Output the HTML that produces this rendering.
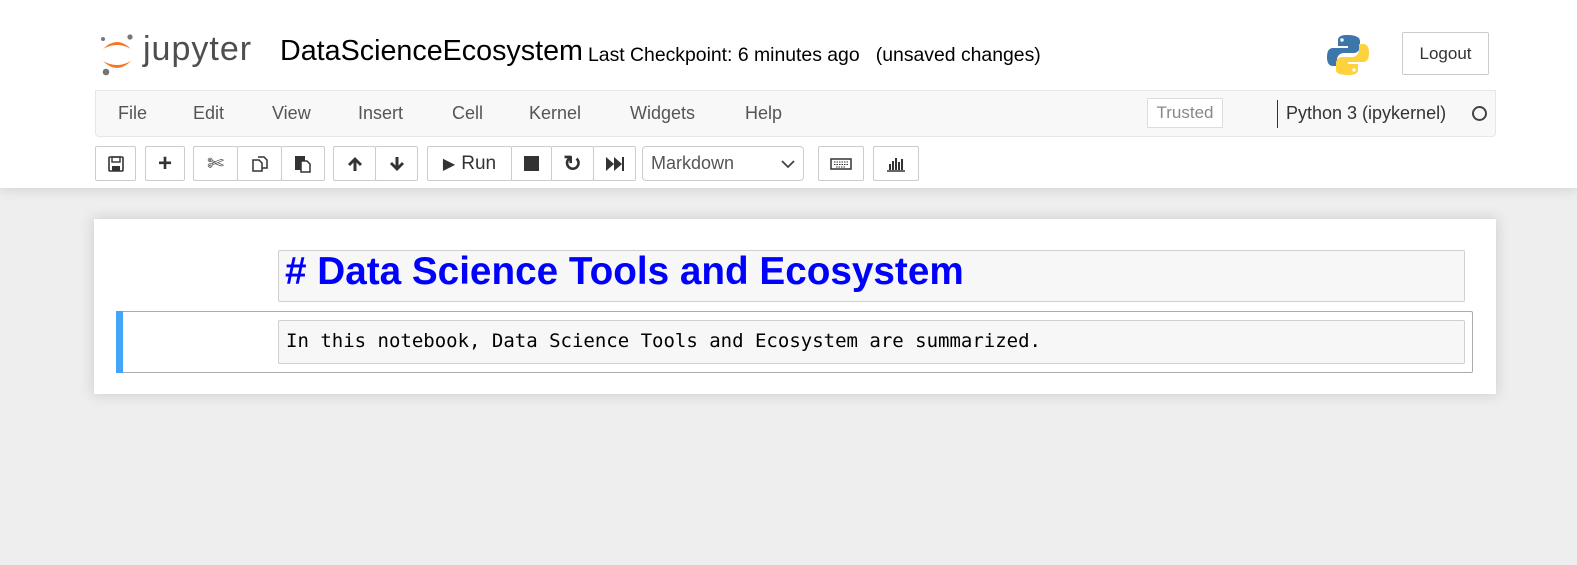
<!DOCTYPE html>
<html><head><meta charset="utf-8"><style>
body{margin:0;width:1577px;height:565px;background:#eee;font-family:"Liberation Sans",Arial,sans-serif;overflow:hidden;position:relative}
.hdr{position:absolute;left:0;top:0;width:1577px;height:188px;background:#fff;box-shadow:0 0 12px 1px rgba(87,87,87,.2)}
.abs{position:absolute}
.menubar{position:absolute;left:95px;top:90px;width:1401px;height:47px;background:#f8f8f8;border:1px solid #e7e7e7;border-radius:0 0 4px 4px;box-sizing:border-box}
.menu{position:absolute;top:103px;font-size:18px;color:#555}
.btn{position:absolute;top:146px;height:35px;border:1px solid #ccc;border-radius:2px;box-sizing:border-box;background:#fff;display:flex;align-items:center;justify-content:center;color:#333}
.nb{position:absolute;left:94px;top:219px;width:1402px;height:175px;background:#fff;box-shadow:0 0 12px 1px rgba(87,87,87,.2)}
</style></head><body>
<div class="hdr"></div>
<svg class="abs" style="left:99px;top:33px" width="36" height="44" viewBox="0 0 36 44">
<path d="M4 16 Q18 2 32 16 Q18 8 4 16Z" fill="#f37726"/>
<path d="M4 28 Q18 42 32 28 Q18 36 4 28Z" fill="#f37726"/>
<circle cx="4" cy="6" r="2" fill="#767677"/><circle cx="31" cy="4" r="2.6" fill="#767677"/><circle cx="7" cy="39" r="3.3" fill="#767677"/>
</svg>
<div class="abs" style="left:143px;top:30px;font-size:34px;color:#4e4e4e;letter-spacing:1px">jupyter</div>
<div class="abs" style="left:280px;top:35px;font-size:28.7px;color:#000">DataScienceEcosystem</div>
<div class="abs" style="left:588px;top:44px;font-size:19.4px;color:#000">Last Checkpoint: 6 minutes ago&nbsp;&nbsp; (unsaved changes)</div>
<svg class="abs" style="left:1326px;top:33px" width="44" height="44" viewBox="0 0 44 44">
<path d="M21 2c-9 0-9 4-9 6v5h10v2H7c-4 0-6 3-6 9s2 9 6 9h4v-6c0-4 3-7 7-7h10c3 0 6-3 6-6V8c0-3-3-6-13-6z" fill="#3d76ab"/>
<path d="M23 42c9 0 9-4 9-6v-5H22v-2h15c4 0 6-3 6-9s-2-9-6-9h-4v6c0 4-3 7-7 7H16c-3 0-6 3-6 6v7c0 3 3 5 13 5z" fill="#fdd23c"/>
<circle cx="16" cy="7" r="1.7" fill="#fff"/><circle cx="28" cy="37" r="1.7" fill="#fff"/>
</svg>
<div class="btn" style="left:1402px;top:32px;width:87px;height:43px;font-size:17px;border-radius:2px">Logout</div>
<div class="menubar"></div>
<div class="menu" style="left:118px">File</div>
<div class="menu" style="left:193px">Edit</div>
<div class="menu" style="left:272px">View</div>
<div class="menu" style="left:358px">Insert</div>
<div class="menu" style="left:452px">Cell</div>
<div class="menu" style="left:529px">Kernel</div>
<div class="menu" style="left:630px">Widgets</div>
<div class="menu" style="left:745px">Help</div>
<div class="abs" style="left:1147px;top:98px;width:76px;height:30px;border:1px solid #ddd;box-sizing:border-box;background:#fff;color:#888;font-size:17px;text-align:center;line-height:28px">Trusted</div>
<div class="abs" style="left:1277px;top:100px;width:1px;height:28px;background:#333"></div>
<div class="menu" style="left:1286px;color:#333">Python 3 (ipykernel)</div>
<div class="abs" style="left:1472px;top:106px;width:11px;height:11px;border:2px solid #444;border-radius:50%"></div>
<div class="btn" style="left:95px;width:41px"><svg width="16" height="16" viewBox="0 0 16 16"><rect x="1" y="1" width="14" height="14" rx="1" fill="none" stroke="#333" stroke-width="1.6"/><rect x="4" y="1" width="8" height="5" fill="none" stroke="#333" stroke-width="1.4"/><rect x="4" y="10" width="8" height="5" fill="#333"/></svg></div>
<div class="btn" style="left:145px;width:40px;font-size:24px;font-weight:bold">+</div>
<div class="btn" style="left:193px;width:45px;font-size:20px">✄</div>
<div class="btn" style="left:237px;width:45px"><svg width="18" height="18" viewBox="0 0 18 18"><path d="M2 5h6l3 3v8H2z M7 2h6l3 3v8h-5" fill="none" stroke="#333" stroke-width="1.5"/></svg></div>
<div class="btn" style="left:281px;width:44px"><svg width="18" height="18" viewBox="0 0 18 18"><rect x="1" y="1" width="10" height="14" fill="#333"/><path d="M7 6h6l3 3v8H7z" fill="#fff" stroke="#333" stroke-width="1.5"/></svg></div>
<div class="btn" style="left:333px;width:43px"><svg width="16" height="16" viewBox="0 0 16 16"><path d="M8 1L1 8l2 2 3.5-3.5V15h3V6.5L13 10l2-2z" fill="#333"/></svg></div>
<div class="btn" style="left:375px;width:43px"><svg width="16" height="16" viewBox="0 0 16 16"><path d="M8 15L1 8l2-2 3.5 3.5V1h3v8.5L13 6l2 2z" fill="#333"/></svg></div>
<div class="btn" style="left:427px;width:85px;font-size:19px"><span style="font-size:16px;margin-right:6px">▶</span>Run</div>
<div class="btn" style="left:511px;width:41px"><div style="width:15px;height:15px;background:#333"></div></div>
<div class="btn" style="left:551px;width:43px;font-size:22px;font-weight:bold">↻</div>
<div class="btn" style="left:593px;width:43px"><svg width="18" height="14" viewBox="0 0 18 14"><path d="M0 0l8 7-8 7z M8 0l8 7-8 7z M16 0h2v14h-2z" fill="#333"/></svg></div>
<div class="btn" style="left:642px;width:162px;justify-content:space-between;padding:0 8px;font-size:18px;color:#555;border-radius:4px">Markdown<svg width="14" height="10" viewBox="0 0 14 10"><path d="M1 2l6 6 6-6" fill="none" stroke="#444" stroke-width="1.8"/></svg></div>
<div class="btn" style="left:818px;width:46px"><svg width="22" height="12" viewBox="0 0 22 12"><rect x="1" y="1" width="20" height="10" fill="none" stroke="#333" stroke-width="1.5"/><path d="M4 4h14M4 6.5h14M6 9h10" stroke="#333" stroke-width="1" stroke-dasharray="1.5 1"/></svg></div>
<div class="btn" style="left:873px;width:46px"><svg width="20" height="16" viewBox="0 0 20 16"><path d="M1 15h18" stroke="#333" stroke-width="1.5"/><path d="M4 8v6M7 5v9M10 2v12M13 6v8M16 3v11" stroke="#333" stroke-width="2"/></svg></div>
<div class="nb"></div>
<div class="abs" style="left:278px;top:250px;width:1187px;height:52px;border:1px solid #cfcfcf;border-radius:2px;background:#f7f7f7;box-sizing:border-box"></div>
<div class="abs" style="left:285px;top:250px;font-size:38.7px;font-weight:bold;color:#0000ff;line-height:44px">&#35; Data Science Tools and Ecosystem</div>
<div class="abs" style="left:116px;top:311px;width:1357px;height:62px;border:1px solid #ababab;border-radius:2px;box-sizing:border-box"></div>
<div class="abs" style="left:116px;top:311px;width:7px;height:62px;background:#42a5f5"></div>
<div class="abs" style="left:278px;top:320px;width:1187px;height:44px;border:1px solid #cfcfcf;border-radius:2px;background:#f7f7f7;box-sizing:border-box"></div>
<div class="abs" style="left:286px;top:329px;font-family:'DejaVu Sans Mono','Liberation Mono',monospace;font-size:19px;color:#000;line-height:24px">In this notebook, Data Science Tools and Ecosystem are summarized.</div>
</body></html>
